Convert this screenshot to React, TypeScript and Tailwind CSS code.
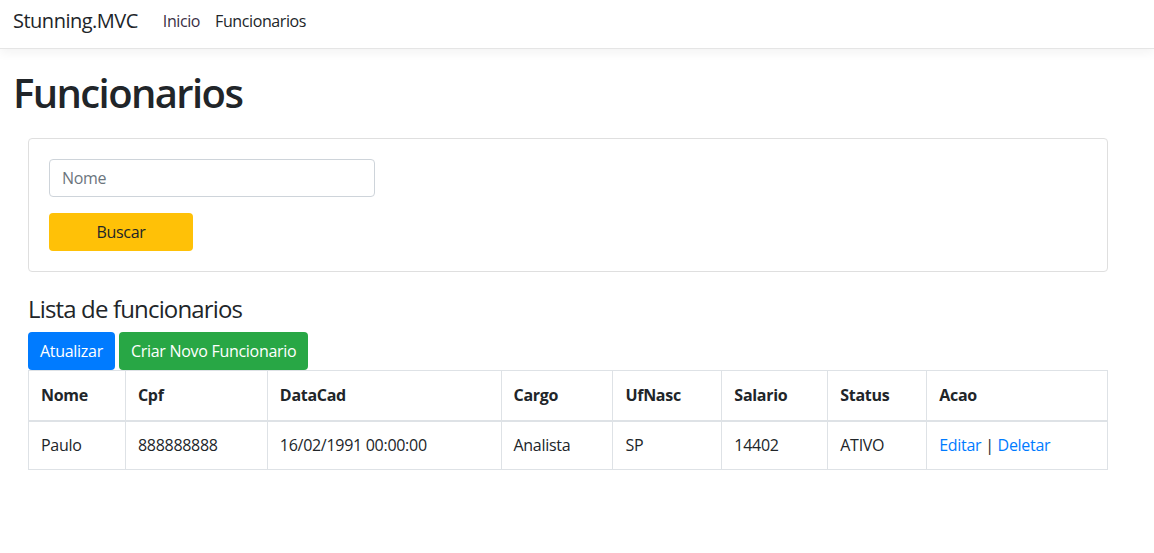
import React from "react";

const font = { fontFamily: '"Open Sans", "Noto Sans", sans-serif' };

const cols = [
  { h: "Nome", w: 97, v: "Paulo" },
  { h: "Cpf", w: 142, v: "888888888" },
  { h: "DataCad", w: 234, v: "16/02/1991 00:00:00" },
  { h: "Cargo", w: 112, v: "Analista" },
  { h: "UfNasc", w: 109, v: "SP" },
  { h: "Salario", w: 106, v: "14402" },
  { h: "Status", w: 99, v: "ATIVO" },
  { h: "Acao", w: 181, v: "" },
];

export default function App() {
  return (
    <div className="min-h-[553px] bg-white text-[#212529] tracking-[-0.018em]" style={font}>
      <nav className="h-[49px] border-b border-[#e5e5e5] shadow-[0_4px_10px_rgba(0,0,0,0.05)] flex items-start pt-[6px] pl-[13px]">
        <span className="text-[20px] leading-[30px] text-[#212529] mr-[25px] tracking-[-0.025em]">Stunning.MVC</span>
        <a className="text-[16px] leading-[30px] text-[#3a2f45] mr-[15px] tracking-[-0.025em]">Inicio</a>
        <a className="text-[16px] leading-[30px] text-[#212529] tracking-[-0.025em]">Funcionarios</a>
      </nav>
      <h1 className="pl-[13px] mt-[20px] text-[40px] leading-[48px] font-semibold tracking-[-0.04em]">Funcionarios</h1>
      <div className="ml-[28px] w-[1080px]">
        <div className="mt-[21px] border border-[#dfdfdf] rounded-[4px] p-[20px]">
          <div className="w-[326px] h-[38px] border border-[#ced4da] rounded-[4px] flex items-center px-[12px] text-[16px] text-[#6c757d]">
            Nome
          </div>
          <button className="mt-[16px] w-[144px] h-[38px] rounded-[4px] bg-[#ffc107] text-[16px] text-[#212529]">
            Buscar
          </button>
        </div>
        <h4 className="mt-[22px] text-[24px] leading-[29px] font-normal tracking-[-0.035em]">Lista de funcionarios</h4>
        <div className="mt-[9px] flex gap-[4px]">
          <button className="h-[38px] px-[12px] rounded-[4px] bg-[#007bff] text-white text-[16px]">Atualizar</button>
          <button className="h-[38px] px-[12px] rounded-[4px] bg-[#28a745] text-white text-[16px]">Criar Novo Funcionario</button>
        </div>
        <table className="border-collapse text-[16px]">
          <thead>
            <tr>
              {cols.map((c) => (
                <th
                  key={c.h}
                  style={{ width: c.w }}
                  className="border border-[#dee2e6] border-b-2 h-[50px] px-[12px] text-left font-bold"
                >
                  {c.h}
                </th>
              ))}
            </tr>
          </thead>
          <tbody>
            <tr>
              {cols.map((c) => (
                <td key={c.h} className="border border-[#dee2e6] h-[49px] px-[12px]">
                  {c.h === "Acao" ? (
                    <>
                      <a className="text-[#007bff]">Editar</a> | <a className="text-[#007bff]">Deletar</a>
                    </>
                  ) : (
                    c.v
                  )}
                </td>
              ))}
            </tr>
          </tbody>
        </table>
      </div>
    </div>
  );
}
